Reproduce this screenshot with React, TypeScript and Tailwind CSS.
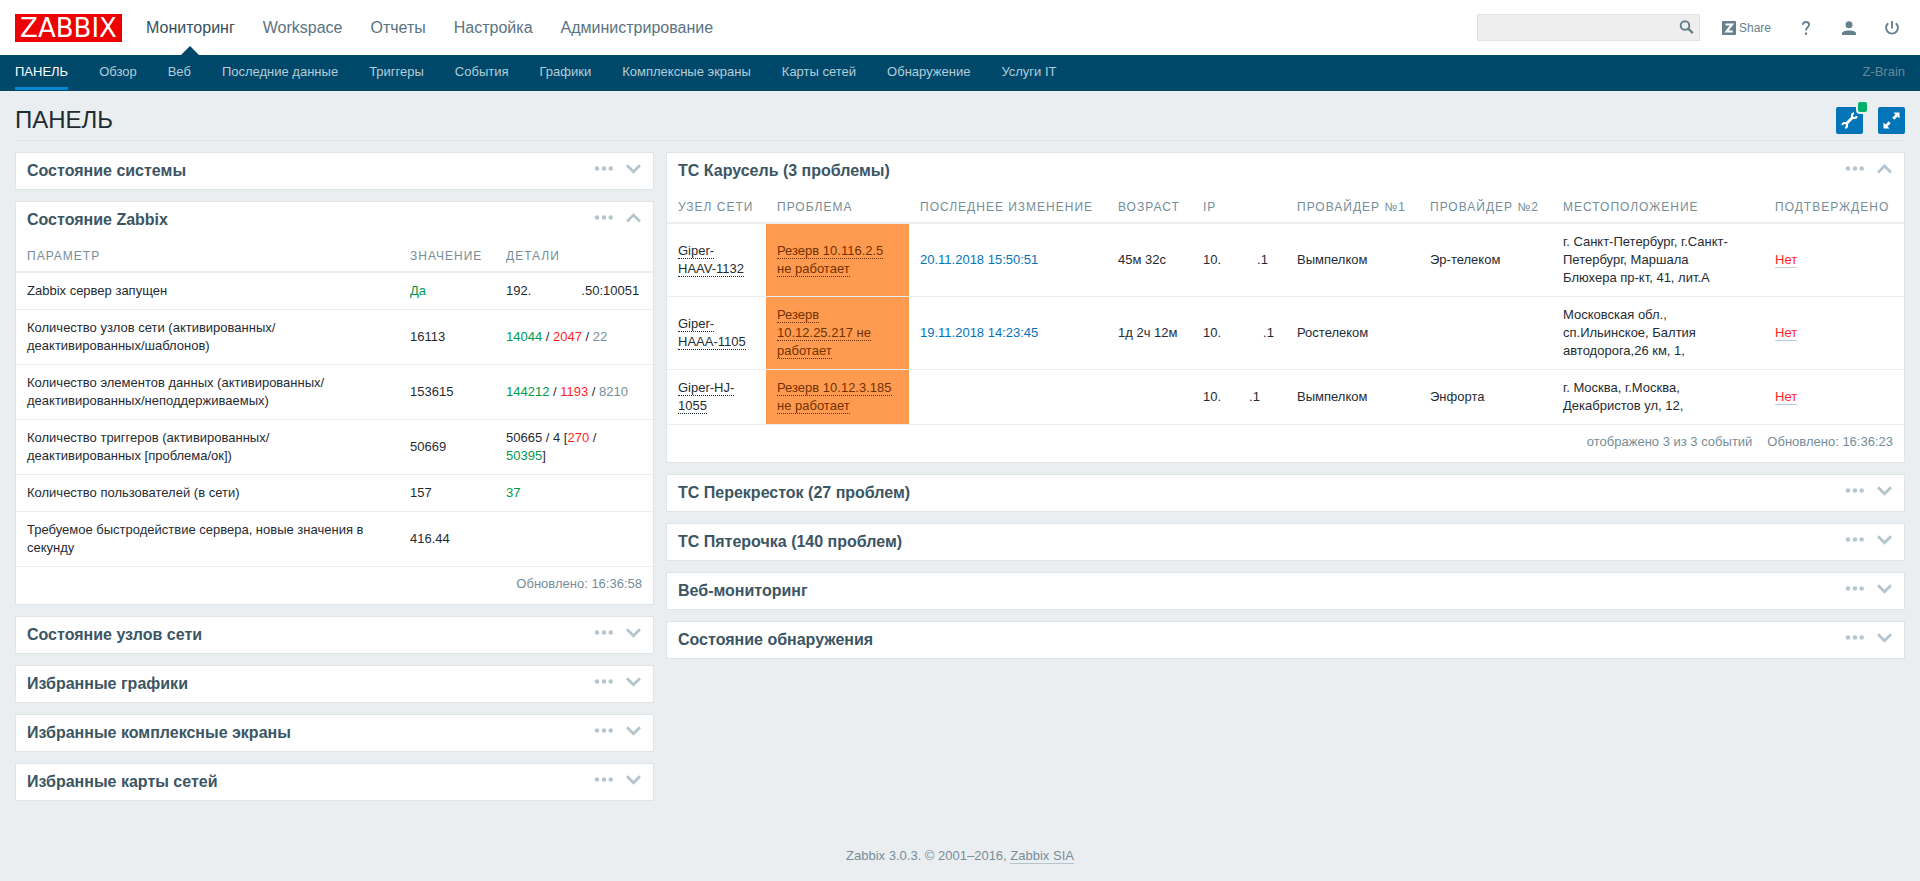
import { useState } from 'react'
import type { ReactNode } from 'react'

interface Problem {
  host: string
  problem: string
  changed: string
  age: string
  ipGap: string
  provider1: string
  provider2: string
  location: string
}

const mainMenu = ['Мониторинг', 'Workspace', 'Отчеты', 'Настройка', 'Администрирование']

const subMenu = [
  'ПАНЕЛЬ',
  'Обзор',
  'Веб',
  'Последние данные',
  'Триггеры',
  'События',
  'Графики',
  'Комплексные экраны',
  'Карты сетей',
  'Обнаружение',
  'Услуги IT'
]

const problems: Problem[] = [
  {
    host: 'Giper-HAAV-1132',
    problem: 'Резерв 10.116.2.5 не работает',
    changed: '20.11.2018 15:50:51',
    age: '45м 32с',
    ipGap: 'ml-9',
    provider1: 'Вымпелком',
    provider2: 'Эр-телеком',
    location: 'г. Санкт-Петербург, г.Санкт-Петербург, Маршала Блюхера пр-кт, 41, лит.А'
  },
  {
    host: 'Giper-HAAA-1105',
    problem: 'Резерв 10.12.25.217 не работает',
    changed: '19.11.2018 14:23:45',
    age: '1д 2ч 12м',
    ipGap: 'ml-[42px]',
    provider1: 'Ростелеком',
    provider2: '',
    location: 'Московская обл., сп.Ильинское, Балтия автодорога,26 км, 1,'
  },
  {
    host: 'Giper-HJ-1055',
    problem: 'Резерв 10.12.3.185 не работает',
    changed: '',
    age: '',
    ipGap: 'ml-7',
    provider1: 'Вымпелком',
    provider2: 'Энфорта',
    location: 'г. Москва, г.Москва, Декабристов ул, 12,'
  }
]

function Th({ children }: { children: ReactNode }) {
  return (
    <th className="px-[11px] pt-[9px] pb-[6px] text-left text-xs leading-[18px] font-normal tracking-[1px] text-[#768d99] uppercase whitespace-nowrap">
      {children}
    </th>
  )
}

function Td({ children, className = 'pr-[11px]' }: { children?: ReactNode; className?: string }) {
  return <td className={`py-[9px] pl-[11px] align-middle ${className}`}>{children}</td>
}

function Green({ children }: { children: ReactNode }) {
  return <span className="text-[#009a4d]">{children}</span>
}

function Red({ children }: { children: ReactNode }) {
  return <span className="text-[#ff1f1f]">{children}</span>
}

function Grey({ children }: { children: ReactNode }) {
  return <span className="text-[#768d99]">{children}</span>
}

function Widget({ title, children }: { title: string; children?: ReactNode }) {
  const [open, setOpen] = useState(children !== undefined)

  return (
    <section className="border border-[#dfe4e7] bg-white">
      <div className="flex h-9 items-start justify-between pr-3 pl-[11px]">
        <h4 className="pt-[9px] text-base leading-[18px] font-bold text-[#3c5563]">{title}</h4>
        <div className="flex h-[31px] items-center gap-[13px] text-[#b5c5cd]">
          <button type="button" aria-label="Меню" className="cursor-pointer">
            <svg width="19" height="5" viewBox="0 0 19 5" fill="currentColor">
              <circle cx="3" cy="2.5" r="2.2" />
              <circle cx="10" cy="2.5" r="2.2" />
              <circle cx="16.7" cy="2.5" r="2.2" />
            </svg>
          </button>
          <button
            type="button"
            aria-label={open ? 'Свернуть' : 'Развернуть'}
            aria-expanded={open}
            onClick={() => setOpen(!open)}
            className="cursor-pointer"
          >
            <svg width="15" height="10" viewBox="0 0 15 10" fill="none" stroke="currentColor" strokeWidth="2.8">
              <path d={open ? 'M1 8.5 7.5 2 14 8.5' : 'M1 1.2 7.5 7.7 14 1.2'} />
            </svg>
          </button>
        </div>
      </div>
      {open && children}
    </section>
  )
}

function WidgetFooter({ children }: { children: ReactNode }) {
  return (
    <div className="flex justify-end gap-[15px] px-[11px] pt-2 pb-[11px] leading-[18px] text-[#768d99]">
      {children}
    </div>
  )
}

function ZabbixStatus() {
  return (
    <>
      <table className="w-full table-fixed border-collapse leading-[18px]">
        <colgroup>
          <col className="w-[383px]" />
          <col className="w-[96px]" />
          <col className="w-[158px]" />
        </colgroup>
        <thead>
          <tr className="border-b-2 border-[#ebeef0]">
            <Th>Параметр</Th>
            <Th>Значение</Th>
            <Th>Детали</Th>
          </tr>
        </thead>
        <tbody>
          <tr className="border-b border-[#ebeef0]">
            <Td className="pr-6">Zabbix сервер запущен</Td>
            <Td><Green>Да</Green></Td>
            <Td className="whitespace-nowrap">192.<span className="ml-[50px]">.50:10051</span></Td>
          </tr>
          <tr className="border-b border-[#ebeef0]">
            <Td className="pr-6">Количество узлов сети (активированных/деактивированных/шаблонов)</Td>
            <Td>16113</Td>
            <Td><Green>14044</Green> / <Red>2047</Red> / <Grey>22</Grey></Td>
          </tr>
          <tr className="border-b border-[#ebeef0]">
            <Td className="pr-6">Количество элементов данных (активированных/деактивированных/неподдерживаемых)</Td>
            <Td>153615</Td>
            <Td><Green>144212</Green> / <Red>1193</Red> / <Grey>8210</Grey></Td>
          </tr>
          <tr className="border-b border-[#ebeef0]">
            <Td className="pr-6">Количество триггеров (активированных/деактивированных [проблема/ок])</Td>
            <Td>50669</Td>
            <Td>50665 / 4 [<Red>270</Red> /<br /><Green>50395</Green>]</Td>
          </tr>
          <tr className="border-b border-[#ebeef0]">
            <Td className="pr-6">Количество пользователей (в сети)</Td>
            <Td>157</Td>
            <Td><Green>37</Green></Td>
          </tr>
          <tr className="border-b border-[#ebeef0]">
            <Td className="pr-6">Требуемое быстродействие сервера, новые значения в секунду</Td>
            <Td>416.44</Td>
            <Td />
          </tr>
        </tbody>
      </table>
      <WidgetFooter>
        <span>Обновлено: 16:36:58</span>
      </WidgetFooter>
    </>
  )
}

function ProblemsTable() {
  return (
    <>
      <table className="w-full table-fixed border-collapse leading-[18px]">
        <colgroup>
          <col className="w-[99px]" />
          <col className="w-[143px]" />
          <col className="w-[198px]" />
          <col className="w-[85px]" />
          <col className="w-[94px]" />
          <col className="w-[133px]" />
          <col className="w-[133px]" />
          <col className="w-[212px]" />
          <col className="w-[140px]" />
        </colgroup>
        <thead>
          <tr className="border-b-2 border-[#ebeef0]">
            <Th>Узел сети</Th>
            <Th>Проблема</Th>
            <Th>Последнее изменение</Th>
            <Th>Возраст</Th>
            <Th>IP</Th>
            <Th>Провайдер №1</Th>
            <Th>Провайдер №2</Th>
            <Th>Местоположение</Th>
            <Th>Подтверждено</Th>
          </tr>
        </thead>
        <tbody>
          {problems.map((item) => (
            <tr key={item.host} className="border-b border-[#ebeef0]">
              <Td className="pr-4">
                <a href="#" className="border-b border-dotted border-[#1f2c33]">{item.host}</a>
              </Td>
              <Td className="bg-[#ff9b50] pr-[11px] text-[#733100]">
                <a href="#" className="border-b border-dotted border-[#733100]">{item.problem}</a>
              </Td>
              <Td>
                {item.changed && <a href="#" className="text-[#0275b8]">{item.changed}</a>}
              </Td>
              <Td className="whitespace-nowrap">{item.age}</Td>
              <Td className="whitespace-nowrap">10.<span className={item.ipGap}>.1</span></Td>
              <Td>{item.provider1}</Td>
              <Td>{item.provider2}</Td>
              <Td className="pr-6">{item.location}</Td>
              <Td>
                <a href="#" className="border-b border-[#c0cdd4] text-[#ff1f1f]">Нет</a>
              </Td>
            </tr>
          ))}
        </tbody>
      </table>
      <WidgetFooter>
        <span>отображено 3 из 3 событий</span>
        <span>Обновлено: 16:36:23</span>
      </WidgetFooter>
    </>
  )
}

function Header() {
  return (
    <header>
      <div className="flex h-[55px] items-center justify-between bg-white px-[15px]">
        <div className="flex h-full items-center">
          <a
            href="#"
            className="mr-6 flex h-7 w-[107px] items-center justify-center bg-[#ee0000] font-['DejaVu_Sans',sans-serif] text-[26px] leading-7 text-white"
          >
            ZABBIX
          </a>
          <nav className="flex h-full gap-7 text-base">
            {mainMenu.map((item, i) => (
              <a
                key={item}
                href="#"
                className={i === 0 ? 'relative flex items-center text-[#36505b]' : 'flex items-center text-[#5a737f]'}
              >
                {item}
                {i === 0 && (
                  <span className="absolute bottom-0 left-1/2 -ml-[9px] border-x-[9px] border-b-[9px] border-x-transparent border-b-[#00486a]" />
                )}
              </a>
            ))}
          </nav>
        </div>
        <div className="flex items-center text-[#66818e]">
          <form className="relative mr-[22px]">
            <input
              type="text"
              aria-label="Поиск"
              className="block h-[27px] w-[223px] border border-[#e2e2e2] bg-[#eeeeee] pr-7 pl-2 text-[13px] outline-none"
            />
            <button type="button" aria-label="Искать" className="absolute top-[6px] right-[6px]">
              <svg width="15" height="15" viewBox="0 0 15 15" fill="none" stroke="currentColor" className="block">
                <circle cx="6" cy="5.5" r="4.3" strokeWidth="2" />
                <path d="M9.200 8.700 13.800 13.100" strokeWidth="2.400" />
              </svg>
            </button>
          </form>
          <a href="#" className="mr-7 flex items-center gap-[3px] text-xs">
            <svg width="14" height="14" viewBox="0 0 14 14">
              <rect width="14" height="14" rx="0.8" fill="currentColor" />
              <path d="M3.5 3.5H10L4.5 10.5H10.7" fill="none" stroke="#fff" strokeWidth="2.1" />
            </svg>
            Share
          </a>
          <a href="#" aria-label="Помощь" className="mr-[29px]">
            <svg width="14" height="14" viewBox="0 0 14 14" fill="none" stroke="currentColor" strokeWidth="1.9">
              <path d="M3.9 3.8C4 1.900 5.200 1 7 1c1.900 0 3.100 1 3.100 2.700C10.100 6.200 7 6.200 7 9.500" />
              <path d="M7 11.500v2.300" strokeWidth="2.200" />
            </svg>
          </a>
          <a href="#" aria-label="Профиль" className="mr-[29px]">
            <svg width="14" height="14" viewBox="0 0 14 14" fill="currentColor">
              <circle cx="7" cy="3.700" r="3.500" />
              <path d="M0 14v-1.500c0-1.800 2.800-3 7-3s7 1.200 7 3V14z" />
            </svg>
          </a>
          <a href="#" aria-label="Выход" className="mr-[6px]">
            <svg width="14" height="14" viewBox="0 0 14 14" fill="none" stroke="currentColor" strokeWidth="1.900">
              <path d="M7 0v7.500" />
              <path d="M3.200 2.200A5.900 5.900 0 1 0 10.800 2.200" />
            </svg>
          </a>
        </div>
      </div>
      <div className="flex h-9 justify-between bg-[#00486a] px-[15px] text-[13px]">
        <nav className="flex gap-[31px] pb-px">
          {subMenu.map((item, i) => (
            <a
              key={item}
              href="#"
              className={
                i === 0
                  ? 'border-b-[3px] border-[#0088cc] pt-2 leading-[18px] text-white'
                  : 'pt-2 leading-[18px] text-[#b4cdd9]'
              }
            >
              {item}
            </a>
          ))}
        </nav>
        <span className="pt-2 leading-[18px] text-[#668797]">Z-Brain</span>
      </div>
    </header>
  )
}

function PageTitle() {
  return (
    <div className="flex h-[50px] items-center justify-between border-b border-[#dfe4e7] pt-[9px]">
      <h1 className="text-2xl leading-7 text-[#1f2c33]">ПАНЕЛЬ</h1>
      <div className="flex gap-[15px]">
        <button
          type="button"
          aria-label="Настроить"
          className="relative flex size-[27px] items-center justify-center rounded-[2px] bg-[#0275b8] text-white"
        >
          <svg width="17" height="17" viewBox="0 0 17 17" fill="none" stroke="currentColor">
            <path d="M4.800 12.200 12.200 4.800" strokeWidth="3" />
            <path d="M13 1.300A2.400 2.400 0 1 0 15.700 4" strokeWidth="2" />
            <path d="M4 15.700A2.400 2.400 0 1 0 1.300 13" strokeWidth="2" />
          </svg>
          <span className="absolute -top-[7px] -right-[6px] h-[14px] w-[13px] rounded-[4px] border-2 border-[#ebeef0] bg-[#00b169]" />
        </button>
        <button
          type="button"
          aria-label="Во весь экран"
          className="flex size-[27px] items-center justify-center rounded-[2px] bg-[#0275b8] text-white"
        >
          <svg width="17" height="17" viewBox="0 0 17 17" fill="currentColor">
            <path d="M10.500.500h6v6l-2-2-3.200 3.200-2-2 3.200-3.200z" />
            <path d="M6.500 16.500h-6v-6l2 2 3.200-3.200 2 2-3.200 3.200z" />
          </svg>
        </button>
      </div>
    </div>
  )
}

export default function App() {
  return (
    <div className="flex min-h-screen flex-col bg-[#ebeef0] font-['Liberation_Sans',Arial,sans-serif] text-[13px] text-[#1f2c33]">
      <Header />
      <main className="px-[15px]">
        <PageTitle />
        <div className="mt-[11px] grid grid-cols-[639fr_1239fr] items-start gap-3">
          <div className="flex flex-col gap-[11px]">
            <Widget title="Состояние системы" />
            <Widget title="Состояние Zabbix">
              <ZabbixStatus />
            </Widget>
            <Widget title="Состояние узлов сети" />
            <Widget title="Избранные графики" />
            <Widget title="Избранные комплексные экраны" />
            <Widget title="Избранные карты сетей" />
          </div>
          <div className="flex flex-col gap-[11px]">
            <Widget title="ТС Карусель (3 проблемы)">
              <ProblemsTable />
            </Widget>
            <Widget title="ТС Перекресток (27 проблем)" />
            <Widget title="ТС Пятерочка (140 проблем)" />
            <Widget title="Веб-мониторинг" />
            <Widget title="Состояние обнаружения" />
          </div>
        </div>
      </main>
      <footer className="mt-auto pt-5 pb-4 text-center leading-[18px] text-[#768d99]">
        Zabbix 3.0.3. © 2001–2016,{' '}
        <a href="#" className="border-b border-[#b4c6cf]">Zabbix SIA</a>
      </footer>
    </div>
  )
}
